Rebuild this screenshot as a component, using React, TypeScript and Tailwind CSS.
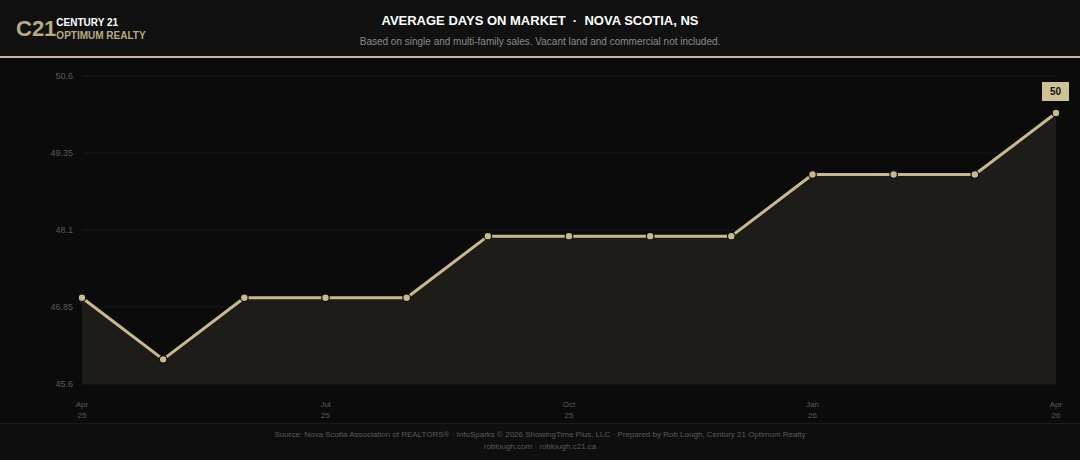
export default function App() {
  const vals = [47, 46, 47, 47, 47, 48, 48, 48, 48, 49, 49, 49, 50];
  const X = (i: number) => 82 + (i * (1056 - 82)) / 12;
  const Y = (v: number) => 75 + ((50.6 - v) / 5) * 308 - 57;
  const pts = vals.map((v, i) => `${X(i)},${Y(v)}`).join(" ");
  const area = `M${X(0)},${Y(45.6)} L${pts.split(" ").join(" L")} L${X(12)},${Y(45.6)} Z`;
  const ticks = [50.6, 49.35, 48.1, 46.85, 45.6];
  const xl = [[0, "Apr", "25"], [3, "Jul", "25"], [6, "Oct", "25"], [9, "Jan", "26"], [12, "Apr", "26"]] as const;
  return (
    <div className="w-[1080px] h-[460px] bg-[#0b0b0b] flex flex-col" style={{ fontFamily: "'Liberation Sans', Arial, sans-serif" }}>
      <div className="h-[56px] bg-[#111111] relative flex flex-col items-center">
        <div className="absolute left-[16px] top-[17px] flex items-start">
          <span className="text-[#b9aa82] font-bold text-[22px] leading-[24px]">C21</span>
          <div className="flex flex-col leading-[13px] mt-[-1px]">
            <span className="text-white font-bold text-[10px]">CENTURY 21</span>
            <span className="text-[#b9aa82] font-bold text-[10px]">OPTIMUM REALTY</span>
          </div>
        </div>
        <div className="text-white font-bold text-[13px] mt-[11px]">AVERAGE DAYS ON MARKET &nbsp;·&nbsp; NOVA SCOTIA, NS</div>
        <div className="text-[#8a8a8a] text-[10px] mt-[3px]">Based on single and multi-family sales. Vacant land and commercial not included.</div>
      </div>
      <div className="h-[2px] bg-[#c9b98f]" />
      <svg width="1080" height="365" className="block">
        {ticks.map((t) => (
          <g key={t}>
            <line x1="82" x2="1056" y1={Y(t)} y2={Y(t)} stroke="#1b1b1b" strokeWidth="1" />
            <text x="73" y={Y(t) + 3} textAnchor="end" fontSize="9" fill="#5a5a5a">{t}</text>
          </g>
        ))}
        <path d={area} fill="#1e1c18" />
        <polyline points={pts} fill="none" stroke="#c9b98f" strokeWidth="3" strokeLinejoin="round" />
        {vals.map((v, i) => (
          <circle key={i} cx={X(i)} cy={Y(v)} r="3.8" fill="#c9b98f" stroke="#0b0b0b" strokeWidth="1.2" />
        ))}
        <rect x="1042" y={24} width="27" height="19" fill="#cfc196" />
        <text x="1055.5" y={37} textAnchor="middle" fontSize="10" fontWeight="bold" fill="#111">50</text>
        {xl.map(([i, m, y]) => (
          <g key={i}>
            <text x={X(i)} y="349" textAnchor="middle" fontSize="8" fill="#5a5a5a">{m}</text>
            <text x={X(i)} y="360" textAnchor="middle" fontSize="8" fill="#5a5a5a">{y}</text>
          </g>
        ))}
      </svg>
      <div className="flex-1 border-t border-[#1c1c1c] bg-[#0e0e0e] flex flex-col items-center text-[#5a5a5a] text-[8px] leading-[12px] pt-[5px]">
        <div>Source: Nova Scotia Association of REALTORS® · InfoSparks © 2026 ShowingTime Plus, LLC · Prepared by Rob Lough, Century 21 Optimum Realty</div>
        <div>roblough.com · roblough.c21.ca</div>
      </div>
    </div>
  );
}
